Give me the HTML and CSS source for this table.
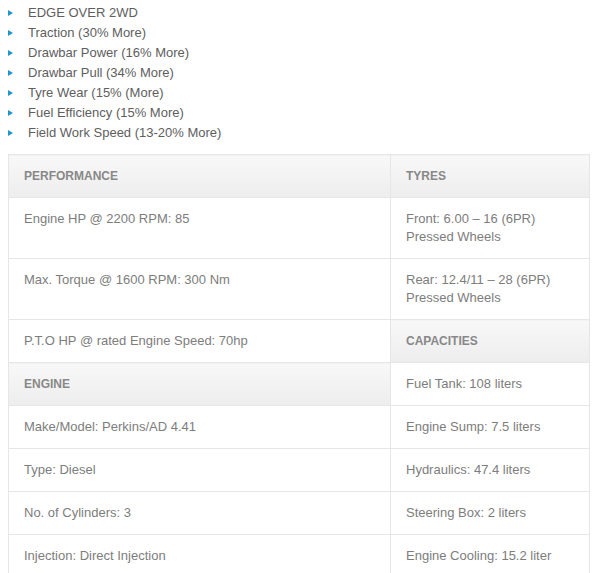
FILE: index.html
```html
<!DOCTYPE html>
<html>
<head>
<meta charset="utf-8">
<link rel="stylesheet" href="styles.css">
</head>
<body>
<ul class="edge-list">
  <li>EDGE OVER 2WD</li>
  <li>Traction (30% More)</li>
  <li>Drawbar Power (16% More)</li>
  <li>Drawbar Pull (34% More)</li>
  <li>Tyre Wear (15% (More)</li>
  <li>Fuel Efficiency (15% More)</li>
  <li>Field Work Speed (13-20% More)</li>
</ul>
<table class="spec">
  <tr><th class="c-left">PERFORMANCE</th><th>TYRES</th></tr>
  <tr><td class="c-left">Engine HP @ 2200 RPM: 85</td><td>Front: 6.00 – 16 (6PR)<br>Pressed Wheels</td></tr>
  <tr><td class="c-left">Max. Torque @ 1600 RPM: 300 Nm</td><td>Rear: 12.4/11 – 28 (6PR)<br>Pressed Wheels</td></tr>
  <tr><td class="c-left">P.T.O HP @ rated Engine Speed: 70hp</td><th>CAPACITIES</th></tr>
  <tr><th class="c-left">ENGINE</th><td>Fuel Tank: 108 liters</td></tr>
  <tr><td class="c-left">Make/Model: Perkins/AD 4.41</td><td>Engine Sump: 7.5 liters</td></tr>
  <tr><td class="c-left">Type: Diesel</td><td>Hydraulics: 47.4 liters</td></tr>
  <tr><td class="c-left">No. of Cylinders: 3</td><td>Steering Box: 2 liters</td></tr>
  <tr><td class="c-left">Injection: Direct Injection</td><td>Engine Cooling: 15.2 liter</td></tr>
</table>
</body>
</html>
```
FILE: styles.css
```css
html, body { background: #fff; }
body {
  margin: 0 8px;
  font-family: "Liberation Sans", Arial, sans-serif;
}
.edge-list {
  list-style: none;
  margin: 3px 0 0;
  padding: 0;
}
.edge-list li {
  position: relative;
  padding-left: 20px;
  font-size: 13px;
  line-height: 20px;
  color: #5e5e5e;
}
.edge-list li::before {
  content: "";
  position: absolute;
  left: 0;
  top: 7px;
  border-left: 5px solid #2096d0;
  border-top: 3.5px solid transparent;
  border-bottom: 3.5px solid transparent;
}
.spec {
  margin-top: 11px;
  width: 582px;
  border-collapse: collapse;
  border: 1px solid #e6e6e6;
  font-size: 13px;
  line-height: 18px;
  color: #7d7d7d;
}
.spec td, .spec th {
  border: 1px solid #e6e6e6;
  padding: 12px 15px;
  text-align: left;
  vertical-align: middle;
}
.spec td.c-left { vertical-align: top; }
.spec .c-left { width: 351px; }
.spec th {
  font-size: 12px;
  font-weight: bold;
  color: #888;
  background: linear-gradient(#f8f8f8, #ededed);
}
```
